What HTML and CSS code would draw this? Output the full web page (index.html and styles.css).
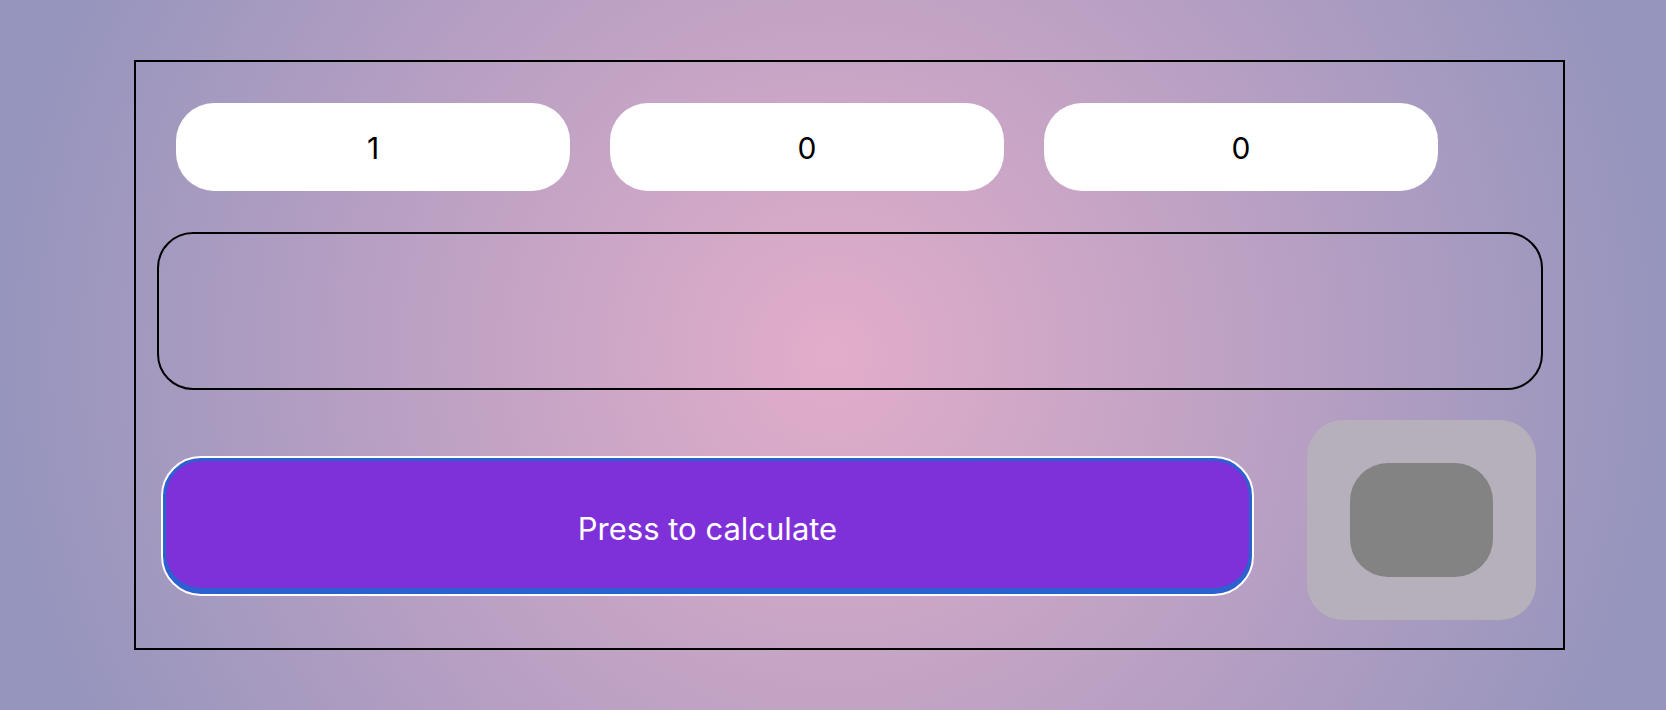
FILE: index.html
```html
<!DOCTYPE html>
<html>
<head>
<meta charset="utf-8">
<link rel="stylesheet" href="styles.css">
</head>
<body>
<div class="frame">
  <div class="inputs">
    <div class="field">1</div>
    <div class="field">0</div>
    <div class="field">0</div>
  </div>
  <div class="display"></div>
  <div class="bottom">
    <button class="calc">Press to calculate</button>
    <div class="toggle"><div class="knob"></div></div>
  </div>
</div>
</body>
</html>
```
FILE: styles.css
```css
html, body {
  margin: 0;
  padding: 0;
}
body {
  width: 1666px;
  height: 710px;
  overflow: hidden;
  background: radial-gradient(circle farthest-side at 833px 355px, #e2adca 0%, #9695bd 100%);
  font-family: Inter, "Noto Sans", sans-serif;
  padding-top: 60px;
  box-sizing: border-box;
}
.frame {
  margin-left: 134px;
  width: 1431px;
  height: 590px;
  box-sizing: border-box;
  border: 2px solid #000;
  display: flex;
  flex-direction: column;
}
.inputs {
  display: flex;
  gap: 40px;
  padding: 41px 0 0 40px;
}
.field {
  width: 394px;
  height: 88px;
  background: #fff;
  border-radius: 38px;
  display: flex;
  align-items: center;
  justify-content: center;
  font-size: 30px;
  padding-top: 2px;
  box-sizing: border-box;
  color: #000;
}
.display {
  margin: 41px 0 0 21px;
  width: 1386px;
  height: 158px;
  box-sizing: border-box;
  border: 2px solid #000;
  border-radius: 36px;
}
.bottom {
  display: flex;
  align-items: flex-start;
  margin-top: 30px;
  padding-left: 25px;
}
.calc {
  margin-top: 36px;
  width: 1093px;
  height: 140px;
  box-sizing: border-box;
  border: 2px solid #fff;
  border-radius: 40px;
  background: #7f31d9;
  box-shadow: inset 0 0 0 3px #2b62cf, inset 0 -3px 0 3px #2b62cf;
  color: #fff;
  font-family: Inter, "Noto Sans", sans-serif;
  font-size: 31px;
  padding: 5px 0 0 0;
}
.toggle {
  margin-left: 53px;
  width: 229px;
  height: 200px;
  border-radius: 36px;
  background: #b5b0bc;
  display: flex;
  align-items: center;
  justify-content: center;
}
.knob {
  width: 143px;
  height: 114px;
  border-radius: 38px;
  background: #838383;
}
```
